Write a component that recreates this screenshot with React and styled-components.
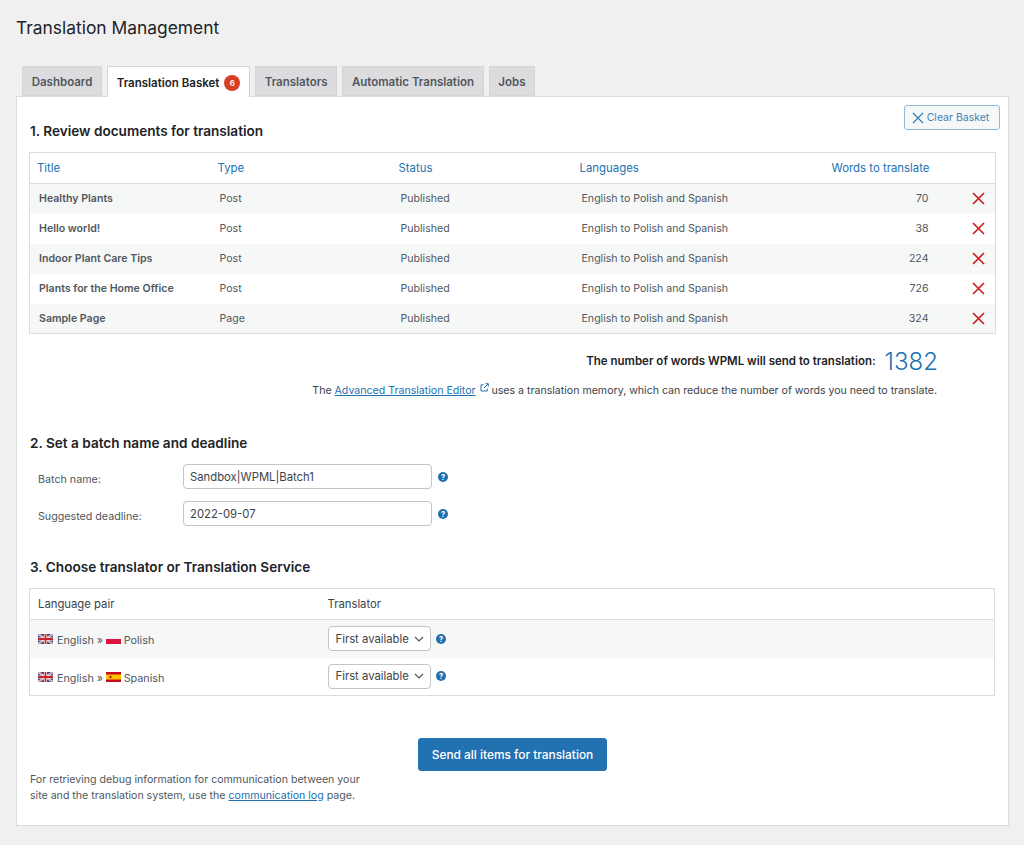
import React from "react";
import styled, { createGlobalStyle } from "styled-components";

const Global = createGlobalStyle`
  html, body { margin: 0; padding: 0; background: #f0f0f1; }
  body { font-family: Inter, "Liberation Sans", sans-serif; color: #3c434a; font-size: 11px; -webkit-font-smoothing: antialiased; }
  * { box-sizing: border-box; }
`;
const Page = styled.div`width: 1024px; height: 845px; padding: 0 15px 0 16px; overflow: hidden;`;
const Title = styled.h1`margin: 0; padding-top: 16px; height: 66px; font-size: 17.4px; line-height: 23px; font-weight: 400; color: #1d2327;`;
const Tabs = styled.div`display: flex; gap: 5px; padding-left: 6px; height: 30px; position: relative; z-index: 1;`;
const Tab = styled.div`
  display: flex; align-items: center; gap: 5px; padding: 1px 8.7px 0; height: ${p => (p.$active ? "31px" : "30px")};
  background: ${p => (p.$active ? "#fff" : "#dcdcde")};
  border: 1px solid #d4d5d7; border-bottom: ${p => (p.$active ? "none" : "1px solid #d4d5d7")};
  color: ${p => (p.$active ? "#1d2327" : "#50575e")}; font-weight: 600; font-size: 11.5px;
`;
const Badge = styled.span`width: 16px; height: 16px; border-radius: 50%; background: #d63f26; color: #fff; font-size: 8px; font-weight: 600; display: flex; align-items: center; justify-content: center;`;
const Panel = styled.div`background: #fff; border: 1px solid #dcdcde; height: 730px; padding: 8px 8px 0 12px; display: flex; flex-direction: column;`;
const TopRow = styled.div`display: flex; justify-content: space-between; align-items: flex-end; height: 35px;`;
const Heading = styled.h2`margin: 0 0 0 1px; font-size: 13.6px; line-height: 18px; font-weight: 600; color: #1d2327;`;
const ClearButton = styled.button`
  width: 96px; height: 25px; display: flex; align-items: center; justify-content: center; gap: 3px; padding: 0 3px 0 0; align-self: flex-start;
  border: 1px solid #8fb8da; border-radius: 3px; background: #f6f7f7; color: #3f83bb; font: 400 10.5px Inter, sans-serif;
`;
const Table = styled.table`width: 966px; border-collapse: collapse; table-layout: fixed; border: 1px solid #dcdcde; font-size: 10.6px;`;
const DocsTable = styled(Table)`margin-top: 12px;`;
const Th = styled.th`height: 31px; padding: ${p => (p.$right ? "0" : "0 0 0 7px")}; text-align: ${p => p.$right ? "right" : "left"}; font-weight: 400; color: #2271b1; font-size: 11.4px; border-bottom: 1px solid #dcdcde;`;
const Row = styled.tr`background: ${p => (p.$alt ? "#f6f7f7" : "#fff")};`;
const Td = styled.td`height: 30px; padding: ${p => (p.$right ? "0 1px 0 0" : "0 0 0 9px")}; color: #50575e; font-weight: ${p => (p.$bold ? 600 : 400)}; text-align: ${p => p.$right ? "right" : "left"};`;
const RemoveCell = styled.td`padding: 0 10px 0 0; text-align: right; line-height: 0;`;
const Total = styled.div`display: flex; justify-content: flex-end; align-items: center; gap: 9px; padding-right: 62px; margin-top: 12px; height: 30px; font-size: 11.5px; font-weight: 600; color: #1d2327;`;
const TotalNumber = styled.span`font-size: 24px; font-weight: 300; color: #2271b1;`;
const Note = styled.p`margin: 7px 0 0; padding-right: 63px; text-align: right; font-size: 10.6px; line-height: 16px; color: #3c434a;`;
const Link = styled.a`color: #2271b1; text-decoration: underline;`;
const SectionHeading = styled(Heading)`margin-top: ${p => p.$top}px;`;
const FormRows = styled.div`display: flex; flex-direction: column; gap: 12px; margin-top: 12px; padding-left: 9px;`;
const FormRow = styled.div`display: flex; align-items: center; height: 25px;`;
const Label = styled.label`width: 145px; font-size: 10.7px; color: #50575e; padding-top: 6px;`;
const Input = styled.div`width: 249px; height: 25px; border: 1px solid #c3c4c7; border-radius: 4px; padding: 0 6px; display: flex; align-items: center; font-size: 11.3px; color: #3c434a;`;
const HelpSlot = styled.span`display: inline-flex; margin-left: ${p => p.$gap}px;`;
const PairTable = styled(Table)`margin-top: 12px; height: 108px;`;
const PairTh = styled.th`height: 31px; padding: 0 0 0 8px; text-align: left; font-weight: 400; font-size: 11.3px; color: #3c434a; border-bottom: 1px solid #dcdcde;`;
const PairTd = styled.td`height: 38px; padding: 0 0 0 8px; font-size: 10.8px; color: #50575e;`;
const Pair = styled.span`display: inline-flex; align-items: center; gap: 3px; padding-top: 4px;`;
const PairFlag = styled.span`display: inline-flex; margin-top: -3px; margin-right: ${p => p.$after}px;`;
const SelectCell = styled.div`display: flex; align-items: center;`;
const Select = styled.div`width: 103px; height: 25px; display: flex; align-items: center; justify-content: space-between; padding: 0 6px 0 7px; border: 1px solid #c3c4c7; border-radius: 4px; background: #fff; font-size: 11.3px; color: #3c434a;`;
const Footer = styled.div`display: flex; align-items: flex-start; margin-top: 42px;`;
const Debug = styled.p`margin: 34px 0 0; width: 389px; padding: 0 53px 0 1px; font-size: 10.6px; line-height: 16px; color: #50575e;`;
const SendButton = styled.button`width: 189px; height: 33px; border: 1px solid #2271b1; border-radius: 3px; background: #2271b1; color: #fff; font: 500 11.9px Inter, sans-serif; padding: 0;`;

const Help = () => (
  <svg width="10" height="10" viewBox="0 0 10 10">
    <circle cx="5" cy="5" r="5" fill="#1f6fb0" />
    <text x="5" y="7.7" textAnchor="middle" fontSize="7.5" fontWeight="700" fill="#fff" fontFamily="Inter, sans-serif">?</text>
  </svg>
);
const Cross = ({ size = 13, color = "#cc1818", w = 1.6 }) => (
  <svg width={size} height={size} viewBox="0 0 13 13"><path d="M1 1 L12 12 M12 1 L1 12" stroke={color} strokeWidth={w} fill="none" /></svg>
);
const External = () => (
  <svg width="9" height="9" viewBox="0 0 9 9" style={{ margin: "0 0 2px 4px" }} fill="none" stroke="#2271b1" strokeWidth="1">
    <path d="M3.5 1.8H1v6.2h6.2V5.5" /><path d="M4 5 L8 1 M5.5 .7 H8.3 V3.5" />
  </svg>
);
const Chevron = () => (
  <svg width="10" height="6" viewBox="0 0 10 6"><path d="M1 1 L5 5 L9 1" stroke="#50575e" strokeWidth="1.2" fill="none" /></svg>
);
const FlagUK = () => (
  <svg width="15" height="10" viewBox="0 0 15 10">
    <rect width="15" height="10" fill="#2b3f7c" />
    <path d="M0 0L15 10M15 0L0 10" stroke="#fff" strokeWidth="2" />
    <path d="M0 0L15 10M15 0L0 10" stroke="#c8232c" strokeWidth=".7" />
    <path d="M7.5 0V10M0 5H15" stroke="#fff" strokeWidth="3.2" />
    <path d="M7.5 0V10M0 5H15" stroke="#c8232c" strokeWidth="1.8" />
  </svg>
);
const FlagPL = () => (
  <svg width="15" height="10" viewBox="0 0 15 10"><rect width="15" height="5" fill="#f4f4f4" /><rect y="5" width="15" height="5" fill="#dc143c" /></svg>
);
const FlagES = () => (
  <svg width="15" height="10" viewBox="0 0 15 10">
    <rect width="15" height="10" fill="#c60b1e" /><rect y="2.5" width="15" height="5" fill="#ffc400" /><rect x="3.5" y="3.8" width="2" height="2.4" fill="#ad1519" />
  </svg>
);

const docs = [
  ["Healthy Plants", "Post", 70],
  ["Hello world!", "Post", 38],
  ["Indoor Plant Care Tips", "Post", 224],
  ["Plants for the Home Office", "Post", 726],
  ["Sample Page", "Page", 324],
];
const tabs = ["Translators", "Automatic Translation", "Jobs"];
const pairs = [["Polish", FlagPL], ["Spanish", FlagES]];

export default function App() {
  return (
    <Page>
      <Global />
      <Title>Translation Management</Title>
      <Tabs>
        <Tab>Dashboard</Tab>
        <Tab $active>Translation Basket <Badge>6</Badge></Tab>
        {tabs.map(t => <Tab key={t}>{t}</Tab>)}
      </Tabs>
      <Panel>
        <TopRow>
          <Heading>1. Review documents for translation</Heading>
          <ClearButton><Cross size={12} color="#2271b1" w={1.3} /> Clear Basket</ClearButton>
        </TopRow>
        <DocsTable>
          <colgroup><col width="181" /><col width="181" /><col width="181" /><col width="200" /><col width="157" /><col width="66" /></colgroup>
          <thead>
            <tr><Th>Title</Th><Th>Type</Th><Th>Status</Th><Th>Languages</Th><Th $right>Words to translate</Th><Th /></tr>
          </thead>
          <tbody>
            {docs.map(([title, type, words], i) => (
              <Row key={title} $alt={i % 2 === 0}>
                <Td $bold>{title}</Td><Td>{type}</Td><Td>Published</Td><Td>English to Polish and Spanish</Td>
                <Td $right>{words}</Td>
                <RemoveCell><Cross /></RemoveCell>
              </Row>
            ))}
          </tbody>
        </DocsTable>
        <Total>The number of words WPML will send to translation: <TotalNumber>1382</TotalNumber></Total>
        <Note>The <Link>Advanced Translation Editor</Link><External /> uses a translation memory, which can reduce the number of words you need to translate.</Note>
        <SectionHeading $top={35}>2. Set a batch name and deadline</SectionHeading>
        <FormRows>
          <FormRow><Label>Batch name:</Label><Input>Sandbox|WPML|Batch1</Input><HelpSlot $gap={6}><Help /></HelpSlot></FormRow>
          <FormRow><Label>Suggested deadline:</Label><Input>2022-09-07</Input><HelpSlot $gap={6}><Help /></HelpSlot></FormRow>
        </FormRows>
        <SectionHeading $top={32}>3. Choose translator or Translation Service</SectionHeading>
        <PairTable>
          <colgroup><col width="290" /><col /></colgroup>
          <thead><tr><PairTh>Language pair</PairTh><PairTh>Translator</PairTh></tr></thead>
          <tbody>
            {pairs.map(([name, Flag], i) => (
              <Row key={name} $alt={i === 0}>
                <PairTd><Pair><PairFlag $after={1}><FlagUK /></PairFlag> English » <PairFlag $after={-0.5}><Flag /></PairFlag> {name}</Pair></PairTd>
                <PairTd><SelectCell><Select>First available <Chevron /></Select><HelpSlot $gap={5}><Help /></HelpSlot></SelectCell></PairTd>
              </Row>
            ))}
          </tbody>
        </PairTable>
        <Footer>
          <Debug>For retrieving debug information for communication between your site and the translation system, use the <Link>communication log</Link> page.</Debug>
          <SendButton>Send all items for translation</SendButton>
        </Footer>
      </Panel>
    </Page>
  );
}
